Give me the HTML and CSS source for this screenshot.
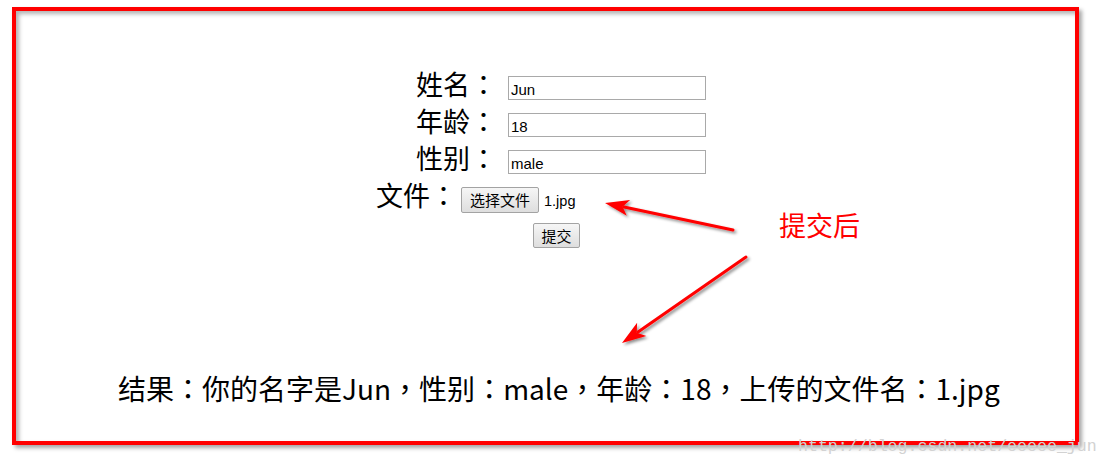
FILE: index.html
```html
<!DOCTYPE html>
<html lang="zh-CN">
<head>
<meta charset="utf-8">
<title>提交后</title>
<link rel="stylesheet" href="styles.css">
</head>
<body>
<div class="page">
  <div class="frame">
    <form class="form">
      <div class="row row-text">
        <span class="label">姓名<span class="p" lang="zh-TW">：</span></span>
        <input class="field" type="text" value="Jun">
      </div>
      <div class="row row-text">
        <span class="label">年龄<span class="p" lang="zh-TW">：</span></span>
        <input class="field" type="text" value="18">
      </div>
      <div class="row row-text">
        <span class="label">性别<span class="p" lang="zh-TW">：</span></span>
        <input class="field" type="text" value="male">
      </div>
      <div class="row row-file">
        <span class="label">文件<span class="p" lang="zh-TW">：</span></span>
        <span class="file">
          <button type="button" class="btn btn-file">选择文件</button>
          <span class="file-name">1.jpg</span>
        </span>
      </div>
      <div class="row row-submit">
        <button type="button" class="btn btn-submit">提交</button>
      </div>
    </form>
    <p class="result">结果<span class="p" lang="zh-TW">：</span>你的名字是Jun<span class="p" lang="zh-TW">，</span>性别<span class="p" lang="zh-TW">：</span>male<span class="p" lang="zh-TW">，</span>年龄<span class="p" lang="zh-TW">：</span>18<span class="p" lang="zh-TW">，</span>上传的文件名<span class="p" lang="zh-TW">：</span>1.jpg</p>
    <span class="note">提交后</span>
  </div>
  <svg class="arrows" width="1109" height="468" viewBox="0 0 1109 468" xmlns="http://www.w3.org/2000/svg">
    <defs>
      <filter id="sh" x="-20%" y="-20%" width="140%" height="140%">
        <feDropShadow dx="2" dy="2" stdDeviation="1.5" flood-color="#000" flood-opacity="0.45"/>
      </filter>
    </defs>
    <g filter="url(#sh)" fill="#ff0000" stroke="#ff0000">
      <line x1="733" y1="230" x2="624" y2="207" stroke-width="3" stroke-linecap="round"/>
      <polygon points="605,203 630.1,200.1 622.6,206.7 626.8,215.8" stroke="none"/>
      <line x1="746" y1="257" x2="638" y2="332" stroke-width="3" stroke-linecap="round"/>
      <polygon points="622,343 637.1,322.7 636.8,332.7 646.3,335.9" stroke="none"/>
    </g>
  </svg>
  <span class="watermark">http://blog.csdn.net/eeeee_jun</span>
</div>
</body>
</html>
```
FILE: styles.css
```css
html, body {
  margin: 0;
  padding: 0;
  background: #ffffff;
}

.page {
  position: relative;
  width: 1109px;
  height: 468px;
  padding: 7px 0 0 12px;
  box-sizing: border-box;
  overflow: hidden;
  font-family: "Noto Sans CJK SC", "Noto Sans", sans-serif;
  color: #000;
}

.frame {
  position: relative;
  width: 1067px;
  height: 438px;
  box-sizing: border-box;
  border: 4px solid #ff0000;
  box-shadow: 3px 3px 4px rgba(0, 0, 0, 0.35), inset 3px 3px 4px rgba(0, 0, 0, 0.3);
  padding-top: 54px;
}

.p {
  font-family: "Noto Sans CJK TC", "Noto Sans CJK SC", sans-serif;
}

.form {
  display: flex;
  flex-direction: column;
  margin: 0;
}

.row {
  display: flex;
  align-items: baseline;
  height: 37px;
}

.label {
  font-size: 27px;
  line-height: 37px;
  white-space: nowrap;
}

.row-text {
  padding-left: 400px;
}

.field {
  margin: 0 0 0 11px;
  width: 198px;
  height: 24px;
  box-sizing: border-box;
  border: 1px solid #a9a9a9;
  padding: 3px 2px 0;
  font-family: "Liberation Sans", Arial, sans-serif;
  font-size: 15px;
  color: #000;
  background: #fff;
}

.row-file {
  padding-left: 360px;
}

.file {
  display: inline-flex;
  align-items: baseline;
  margin-left: 4px;
}

.btn {
  font-family: "Noto Sans CJK SC", sans-serif;
  font-size: 15px;
  line-height: 18px;
  color: #000;
  border: 1px solid #a3a3a3;
  border-radius: 2px;
  background: linear-gradient(#f6f6f6, #dedede);
  margin: 0;
  box-sizing: border-box;
}

.btn-file {
  height: 26px;
  width: 78px;
  padding: 0 4px;
}

.file-name {
  margin-left: 5px;
  font-family: "Liberation Sans", Arial, sans-serif;
  font-size: 14.5px;
}

.row-submit {
  align-items: flex-start;
  padding-left: 517px;
  padding-top: 10px;
}

.btn-submit {
  height: 25px;
  width: 47px;
  padding: 0 4px;
}

.result {
  margin: 108px 0 0 102px;
  font-size: 28px;
  line-height: 40px;
  white-space: nowrap;
}

.note {
  position: absolute;
  left: 763px;
  top: 200px;
  font-size: 27px;
  line-height: 27px;
  color: #ff0000;
  white-space: nowrap;
}

.arrows {
  position: absolute;
  left: 0;
  top: 0;
  pointer-events: none;
}

.watermark {
  position: absolute;
  left: 798px;
  top: 436px;
  font-family: "Liberation Mono", monospace;
  font-size: 16.6px;
  line-height: 22px;
  color: #d2d2d2;
  white-space: nowrap;
}
```
